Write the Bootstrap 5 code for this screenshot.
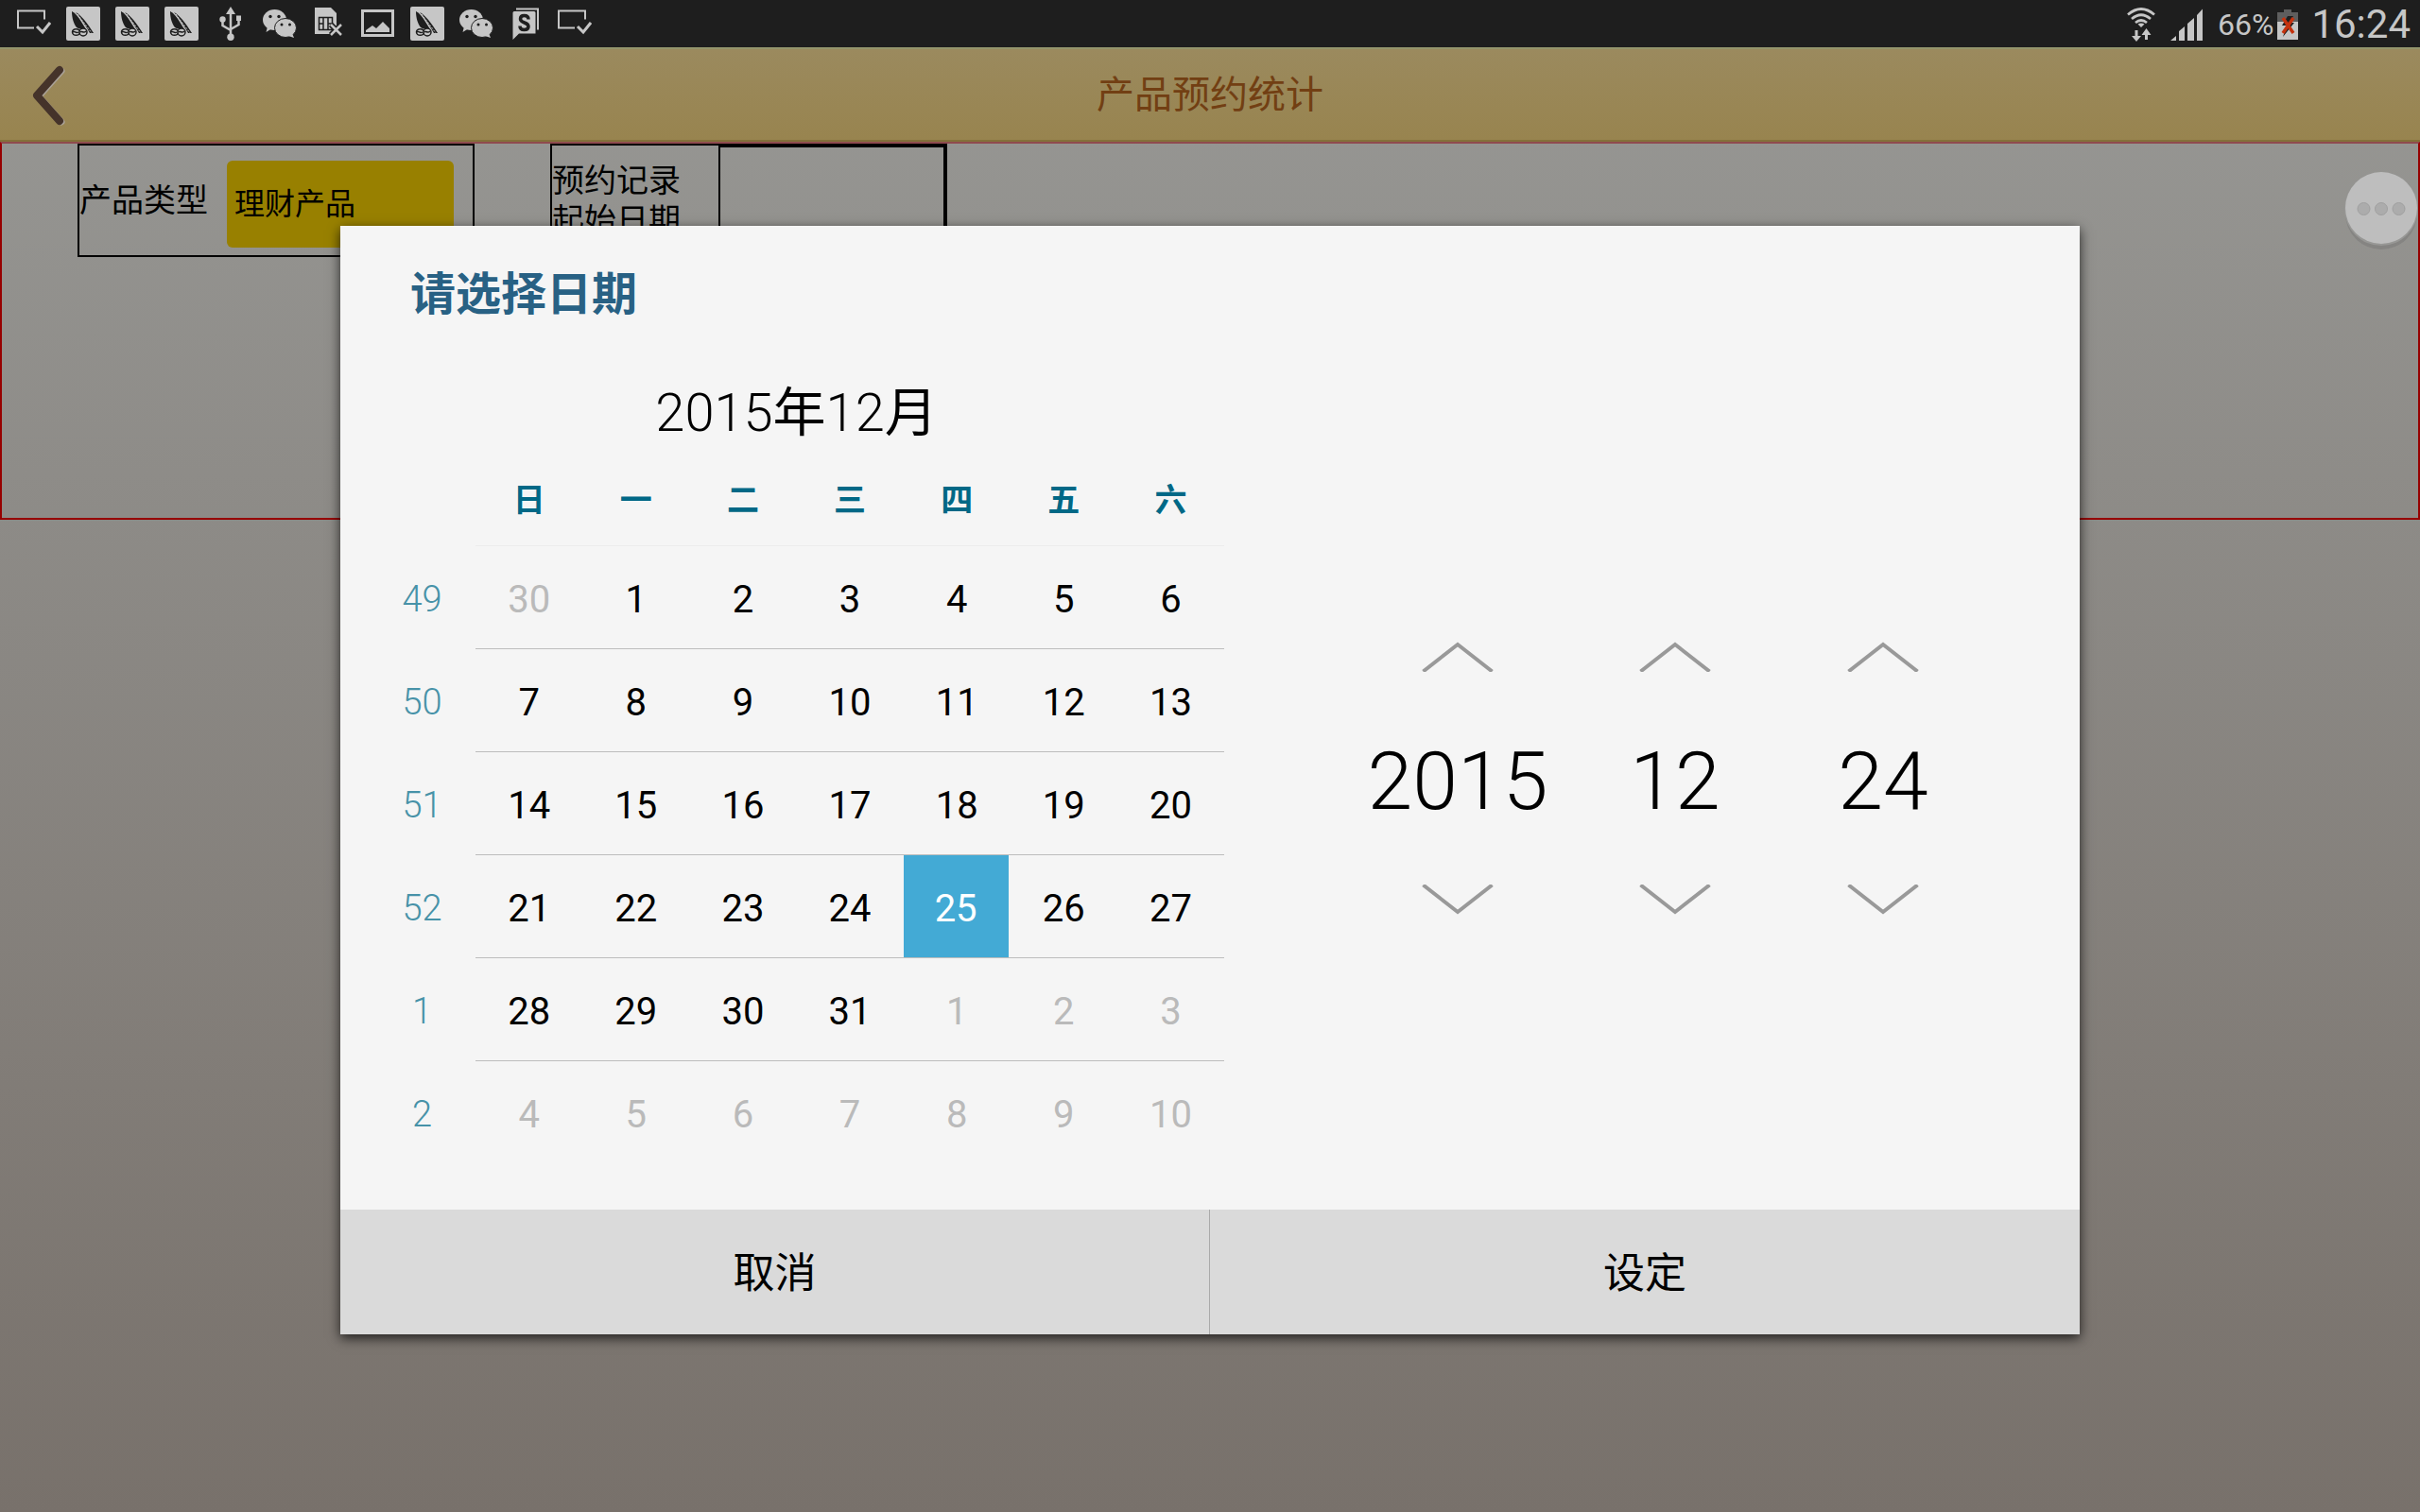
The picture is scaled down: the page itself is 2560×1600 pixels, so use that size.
<!DOCTYPE html>
<html lang="zh-CN">
<head>
<meta charset="utf-8">
<meta name="viewport" content="width=device-width, initial-scale=1">
<title>产品预约统计</title>
<link rel="stylesheet" href="https://cdn.jsdelivr.net/npm/bootstrap@5.3.0/dist/css/bootstrap.min.css">
<style>
  body { font-family: Roboto, "Noto Sans CJK SC", sans-serif; color: #000; background: #1e1e1e; }
  button, input, select { font-family: inherit; color: inherit; }
  .status-bar { height: 50px; padding: 0 10px; background: #1e1e1e; color: #c6c6c6; }
  .status-slot { width: 52px; height: 50px; }
  .status-info { padding-top: 2px; }
  .status-level { font-size: 32px; line-height: 50px; }
  .status-battery { margin-right: 14px; }
  .status-clock { font-size: 42px; line-height: 50px; }
  .screen { background: linear-gradient(#979794, #78716b); }
  .title-bar { height: 100px; padding-top: 2px; border-top: 2px solid #94956c; border-bottom: 2px solid #83713a; background: linear-gradient(#9b8a5e, #98844f); }
  .title-bar h1 { font-size: 40px; color: #723f13; }
  .back-btn { left: 0; top: 2px; width: 104px; height: 96px; }
  .filter-panel { height: 400px; border: 2px solid #960000; border-top-color: #8f4b4e; padding-left: 80px; gap: 80px; }
  .filter-box { width: 420px; height: 120px; border: 2px solid #000; font-size: 34px; line-height: 42px; }
  .filter-label { width: 156px; }
  .filter-label-wide { width: 176px; }
  .type-select { width: 240px; height: 92px; border: 0; border-radius: 6px; background: #988000; font-size: 32px; padding: 0 8px; appearance: none; }
  .date-field { width: 240px; border: 2px solid #000; background: transparent; border-bottom-width: 0; }
  .float-btn { right: 2px; top: 131px; }
  .picker-layer { z-index: 10; }
  .picker-dialog { width: 1840px; max-width: 100%; background: #f5f5f5; box-shadow: 0 4px 12px rgba(0,0,0,.75); }
  .picker-title { font-size: 48px; line-height: 146px; padding-left: 74px; color: #286184; }
  .picker-body { padding: 2px 98px 48px 30px; }
  .calendar { width: 905px; table-layout: fixed; border-collapse: separate; border-spacing: 0; }
  .calendar caption { font-size: 56px; line-height: 89px; padding: 6px 0 0; color: #000; }
  .calendar thead th { height: 96px; padding-top: 2px; font-size: 34px; font-weight: 700; color: #006886; border-bottom: 1px solid #ececec; }
  .calendar thead td { border: 0; }
  .calendar tbody th { padding-top: 6px; font-size: 38px; font-weight: 300; color: #4792a8; }
  .calendar tbody td { height: 109px; padding: 0; border-bottom: 1px solid #bdbdbd; }
  .calendar tbody tr:last-child td { border-bottom: 0; }
  .day-btn { display: block; width: 100%; height: 108px; border: 0; padding: 6px 0 0; background: transparent; font-size: 40px; }
  .day-btn.outside { color: #bababa; }
  .day-btn.chosen { width: 111px; background: #43aad5; color: #fff; }
  .wheel { padding-top: 28px; }
  .wheel-col { width: 220px; }
  .wheel-col-year { width: 240px; }
  .wheel-btn { width: 100%; height: 80px; border: 0; background: transparent; padding: 0; }
  .wheel-input { width: 100%; height: 177px; border: 0; background: transparent; text-align: center; font-size: 86px; font-weight: 300; padding: 6px 0 0; }
  .foot-btn { height: 132px; border: 0; border-radius: 0; padding-top: 6px; background: #dadada; font-size: 44px; }
  .foot-cancel { border-right: 1px solid #aaa; }
</style>
<script src="https://cdn.jsdelivr.net/npm/bootstrap@5.3.0/dist/js/bootstrap.bundle.min.js"></script>
</head>
<body class="min-vh-100 d-flex flex-column">

<svg class="d-none" aria-hidden="true">
  <symbol id="i-screen" viewBox="0 0 36 36">
    <path d="M18 22.500H1V4.500h28v9" fill="none" stroke="#c6c6c6" stroke-width="2"/>
    <path d="M21 20l6 6 8-10" transform="translate(0 1)" fill="none" stroke="#c6c6c6" stroke-width="3"/>
  </symbol>
  <symbol id="i-boat" viewBox="0 0 36 36">
    <rect width="36" height="36" rx="2" fill="#c6c6c6"/>
    <path d="M6 5c4 2 7 6 10 11l5 8c-4 0-7 0-10-2C8 18 6 12 6 5z" fill="#1e1e1e"/>
    <path d="M10 6c6 3 12 11 19 22h-4C20 19 15 11 10 6z" fill="#1e1e1e"/>
    <path d="M12 8l15 20" stroke="#c6c6c6" stroke-dasharray="2 1.500" fill="none"/>
    <g fill="#c6c6c6" stroke="#1e1e1e" stroke-width="1.500"><ellipse cx="10.500" cy="27" rx="4" ry="3.300"/><circle cx="18" cy="27" r="4"/></g>
    <path d="M7 27c2-2 3 2 6 0M15 27c2-2 3 2 6-1" fill="none" stroke="#1e1e1e" stroke-width="1.500"/>
  </symbol>
  <symbol id="i-usb" viewBox="0 0 36 36">
    <g fill="none" stroke="#c6c6c6" stroke-width="2.500"><path d="M18 5v27M9.500 14v6l8.500 5M26.500 13v6L18 24"/></g>
    <g fill="#c6c6c6"><path d="M18 0l5 8H13z"/><circle cx="9.500" cy="13.500" r="3.200"/><path d="M24 9.500h5v5.500h-5z"/><circle cx="18" cy="32.300" r="3.700"/></g>
  </symbol>
  <symbol id="i-chat" viewBox="0 0 36 36">
    <g fill="#c6c6c6"><ellipse cx="12.500" cy="14" rx="12.500" ry="11"/><path d="M5 21l-1.500 6L10 23z"/></g>
    <g fill="#c6c6c6" stroke="#1e1e1e"><ellipse cx="24" cy="22.500" rx="11.500" ry="10"/></g>
    <path d="M27 31l6 2-2-5z" fill="#c6c6c6"/>
    <g fill="#1e1e1e"><circle cx="8" cy="10.500" r="1.700"/><circle cx="17" cy="10.500" r="1.700"/><circle cx="20" cy="19" r="1.500"/><circle cx="28.500" cy="19" r="1.500"/></g>
  </symbol>
  <symbol id="i-sim" viewBox="0 0 36 36">
    <path d="M3 1h17l6 6v22H3z" fill="#c6c6c6"/>
    <path d="M7.500 11.500h14v13h-14zM12 11v14M17 11v14M7 18h5M17 18h5" fill="none" stroke="#1e1e1e" stroke-width="1.500"/>
    <path d="M20 19l11 11M31 19L20 30" stroke="#1e1e1e" stroke-width="6"/>
    <path d="M20 19l11 11M31 19L20 30" stroke="#c6c6c6" stroke-width="2.500"/>
  </symbol>
  <symbol id="i-image" viewBox="0 0 36 36">
    <path d="M1.500 4.500h32v26h-32z" fill="none" stroke="#c6c6c6" stroke-width="3"/>
    <path d="M5 27v-2l7-5 4 3 7-7 7 7v4z" fill="#c6c6c6"/>
  </symbol>
  <symbol id="i-back" viewBox="0 0 40 66">
    <path d="M33 6L9 33l24 27" fill="none" stroke="#aaa297" stroke-width="7" stroke-linecap="round" stroke-linejoin="round"/>
    <path d="M31 5L7 32l24 27" fill="none" stroke="#45332a" stroke-width="8" stroke-linecap="round" stroke-linejoin="round"/>
  </symbol>
  <symbol id="i-up" viewBox="0 0 78 32"><path d="M2.500 31.500L39 3l36.500 28.500" fill="none" stroke="#999" stroke-width="4"/></symbol>
  <symbol id="i-down" viewBox="0 0 78 32"><path d="M2.500 .5L39 29 75.500 .5" fill="none" stroke="#999" stroke-width="4"/></symbol>
</svg>

<header class="status-bar d-flex align-items-center justify-content-between">
  <div class="d-flex">
    <span class="status-slot d-flex align-items-center justify-content-center"><svg width="36" height="36"><use href="#i-screen"/></svg></span>
    <span class="status-slot d-flex align-items-center justify-content-center"><svg width="36" height="36"><use href="#i-boat"/></svg></span>
    <span class="status-slot d-flex align-items-center justify-content-center"><svg width="36" height="36"><use href="#i-boat"/></svg></span>
    <span class="status-slot d-flex align-items-center justify-content-center"><svg width="36" height="36"><use href="#i-boat"/></svg></span>
    <span class="status-slot d-flex align-items-center justify-content-center"><svg width="36" height="36"><use href="#i-usb"/></svg></span>
    <span class="status-slot d-flex align-items-center justify-content-center"><svg width="36" height="36"><use href="#i-chat"/></svg></span>
    <span class="status-slot d-flex align-items-center justify-content-center"><svg width="36" height="36"><use href="#i-sim"/></svg></span>
    <span class="status-slot d-flex align-items-center justify-content-center"><svg width="36" height="36"><use href="#i-image"/></svg></span>
    <span class="status-slot d-flex align-items-center justify-content-center"><svg width="36" height="36"><use href="#i-boat"/></svg></span>
    <span class="status-slot d-flex align-items-center justify-content-center"><svg width="36" height="36"><use href="#i-chat"/></svg></span>
    <span class="status-slot d-flex align-items-center justify-content-center"><svg width="36" height="36" viewBox="0 0 36 36">
      <path d="M8 2.500h23v22" fill="none" stroke="#c6c6c6" stroke-width="2"/>
      <path d="M6 5h21q1.500 0 1.500 1.500v22H11l-6.500 6.500V6.500Q4.500 5 6 5z" fill="#c6c6c6"/>
      <path d="M21 13.500c0-3-2-4-4.500-4s-4 1.200-4 3.500c0 5 8.500 3 8.500 8 0 2.500-2 3.500-4.500 3.500s-4.500-1.200-4.500-4" fill="none" stroke="#1e1e1e" stroke-width="3.500"/>
    </svg></span>
    <span class="status-slot d-flex align-items-center justify-content-center"><svg width="36" height="36"><use href="#i-screen"/></svg></span>
  </div>
  <div class="status-info d-flex align-items-center">
    <svg class="me-3" width="30" height="36" viewBox="0 0 30 36">
      <g fill="none" stroke="#c6c6c6" stroke-width="2.700"><path d="M1 7.500q14-12 28 0M5 12q10-8.500 20 0M9 16q6-5 12 0"/></g>
      <path d="M11.500 17.500q3.500-2 7 0L15 21z" fill="#c6c6c6"/>
      <path d="M10 24v7M20.500 28v6" stroke="#c6c6c6" stroke-width="3"/>
      <path d="M5 30h10l-5 6zM15.500 29h10l-5-7z" fill="#c6c6c6"/>
    </svg>
    <svg class="me-3" width="34" height="36" viewBox="0 0 34 36"><path d="M0 35l6-5v5zM9 35V25l6-5v15zM18 35V17l7-6v24zM28 35V8l6-6.500V35z" fill="#c6c6c6"/></svg>
    <span class="status-level me-1">66%</span>
    <svg class="status-battery" width="22" height="34" viewBox="0 0 22 34">
      <path d="M7 1h8v3h7v10H0V4h7z" fill="#5e5e5e"/><path d="M0 14h22v19H0z" fill="#c6c6c6"/>
      <path d="M11 8l-6 10h5l-4 12L18 15h-5l4-7z" fill="#1e1e1e"/>
      <path d="M6 10l11 16M17 10L6 26" stroke="#c5330f" stroke-width="3.500"/>
    </svg>
    <span class="status-clock">16:24</span>
  </div>
</header>

<div class="screen flex-grow-1 position-relative">
  <div class="title-bar position-relative d-flex align-items-center justify-content-center">
    <button type="button" class="back-btn btn p-0 position-absolute" aria-label="返回"><svg width="40" height="66"><use href="#i-back"/></svg></button>
    <h1 class="m-0 fw-normal">产品预约统计</h1>
  </div>

  <main class="filter-panel position-relative d-flex align-items-start">
    <div class="filter-box d-flex align-items-center">
      <label class="filter-label" for="type">产品类型</label>
      <select id="type" class="type-select mt-2"><option>理财产品</option></select>
    </div>
    <div class="filter-box d-flex align-items-stretch justify-content-between">
      <label class="filter-label-wide align-self-center" for="start">预约记录<br>起始日期</label>
      <input id="start" class="date-field" type="text" readonly>
    </div>
  </main>

  <button type="button" class="float-btn btn p-0 border-0 position-absolute" aria-label="更多">
    <svg class="d-block" width="78" height="86" viewBox="0 0 78 86">
      <circle cx="39" cy="45" r="38" fill="#858482"/><circle cx="39" cy="40" r="39" fill="#979795"/><circle cx="39" cy="39" r="38" fill="#bebebe"/>
      <g fill="#acacac" stroke="#a0a0a0"><circle cx="20.500" cy="40" r="6.500"/><circle cx="39" cy="40" r="6.500"/><circle cx="57.500" cy="40" r="6.500"/></g>
    </svg>
  </button>

  <div class="picker-layer position-absolute top-0 start-0 w-100 h-100 d-flex align-items-center justify-content-center">
    <section class="picker-dialog" role="dialog" aria-labelledby="picker-title">
      <h2 id="picker-title" class="picker-title fw-bold m-0">请选择日期</h2>
      <div class="picker-body d-flex align-items-center justify-content-between">
        <table class="calendar text-center align-middle">
          <caption class="caption-top text-center"><span class="fw-light">2015</span>年<span class="fw-light">12</span>月</caption>
          <thead>
            <tr><td></td><th scope="col">日</th><th scope="col">一</th><th scope="col">二</th><th scope="col">三</th><th scope="col">四</th><th scope="col">五</th><th scope="col">六</th></tr>
          </thead>
          <tbody>
            <tr><th scope="row">49</th><td><button type="button" class="day-btn outside">30</button></td><td><button type="button" class="day-btn">1</button></td><td><button type="button" class="day-btn">2</button></td><td><button type="button" class="day-btn">3</button></td><td><button type="button" class="day-btn">4</button></td><td><button type="button" class="day-btn">5</button></td><td><button type="button" class="day-btn">6</button></td></tr>
            <tr><th scope="row">50</th><td><button type="button" class="day-btn">7</button></td><td><button type="button" class="day-btn">8</button></td><td><button type="button" class="day-btn">9</button></td><td><button type="button" class="day-btn">10</button></td><td><button type="button" class="day-btn">11</button></td><td><button type="button" class="day-btn">12</button></td><td><button type="button" class="day-btn">13</button></td></tr>
            <tr><th scope="row">51</th><td><button type="button" class="day-btn">14</button></td><td><button type="button" class="day-btn">15</button></td><td><button type="button" class="day-btn">16</button></td><td><button type="button" class="day-btn">17</button></td><td><button type="button" class="day-btn">18</button></td><td><button type="button" class="day-btn">19</button></td><td><button type="button" class="day-btn">20</button></td></tr>
            <tr><th scope="row">52</th><td><button type="button" class="day-btn">21</button></td><td><button type="button" class="day-btn">22</button></td><td><button type="button" class="day-btn">23</button></td><td><button type="button" class="day-btn">24</button></td><td><button type="button" class="day-btn chosen">25</button></td><td><button type="button" class="day-btn">26</button></td><td><button type="button" class="day-btn">27</button></td></tr>
            <tr><th scope="row">1</th><td><button type="button" class="day-btn">28</button></td><td><button type="button" class="day-btn">29</button></td><td><button type="button" class="day-btn">30</button></td><td><button type="button" class="day-btn">31</button></td><td><button type="button" class="day-btn outside">1</button></td><td><button type="button" class="day-btn outside">2</button></td><td><button type="button" class="day-btn outside">3</button></td></tr>
            <tr><th scope="row">2</th><td><button type="button" class="day-btn outside">4</button></td><td><button type="button" class="day-btn outside">5</button></td><td><button type="button" class="day-btn outside">6</button></td><td><button type="button" class="day-btn outside">7</button></td><td><button type="button" class="day-btn outside">8</button></td><td><button type="button" class="day-btn outside">9</button></td><td><button type="button" class="day-btn outside">10</button></td></tr>
          </tbody>
        </table>
        <div class="wheel d-flex">
          <div class="wheel-col wheel-col-year">
            <button type="button" class="wheel-btn" aria-label="下一年"><svg width="78" height="32"><use href="#i-up"/></svg></button>
            <input class="wheel-input d-block" type="text" value="2015" aria-label="年">
            <button type="button" class="wheel-btn" aria-label="上一年"><svg width="78" height="32"><use href="#i-down"/></svg></button>
          </div>
          <div class="wheel-col">
            <button type="button" class="wheel-btn" aria-label="下一月"><svg width="78" height="32"><use href="#i-up"/></svg></button>
            <input class="wheel-input d-block" type="text" value="12" aria-label="月">
            <button type="button" class="wheel-btn" aria-label="上一月"><svg width="78" height="32"><use href="#i-down"/></svg></button>
          </div>
          <div class="wheel-col">
            <button type="button" class="wheel-btn" aria-label="后一日"><svg width="78" height="32"><use href="#i-up"/></svg></button>
            <input class="wheel-input d-block" type="text" value="24" aria-label="日">
            <button type="button" class="wheel-btn" aria-label="前一日"><svg width="78" height="32"><use href="#i-down"/></svg></button>
          </div>
        </div>
      </div>
      <div class="d-flex">
        <button type="button" class="foot-btn foot-cancel w-50">取消</button>
        <button type="button" class="foot-btn w-50">设定</button>
      </div>
    </section>
  </div>
</div>
</body>
</html>
